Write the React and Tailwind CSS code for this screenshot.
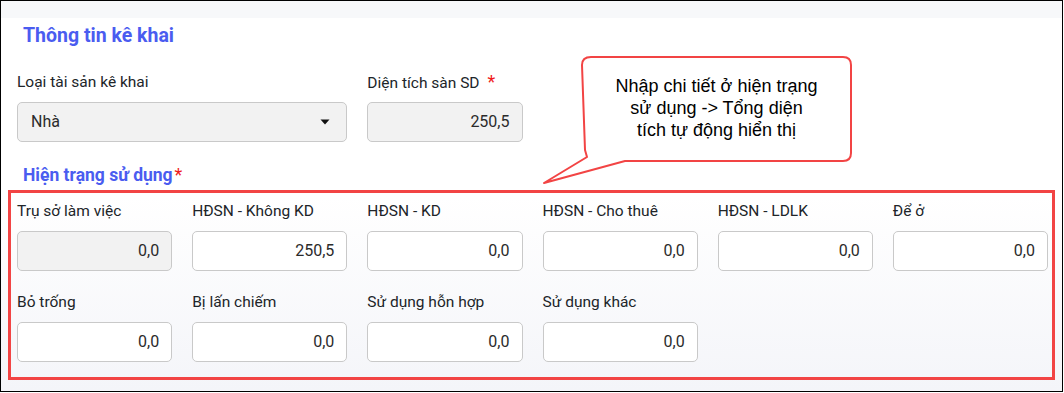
const usageFields = [
  { label: "Trụ sở làm việc", value: "0,0", disabled: true },
  { label: "HĐSN - Không KD", value: "250,5" },
  { label: "HĐSN - KD", value: "0,0" },
  { label: "HĐSN - Cho thuê", value: "0,0" },
  { label: "HĐSN - LDLK", value: "0,0" },
  { label: "Để ở", value: "0,0" },
  { label: "Bỏ trống", value: "0,0" },
  { label: "Bị lấn chiếm", value: "0,0" },
  { label: "Sử dụng hỗn hợp", value: "0,0" },
  { label: "Sử dụng khác", value: "0,0" },
];

const Field = ({ label, value, disabled, required }) => (
  <div className="flex flex-col">
    <div className="h-[20px] leading-[20px] text-[15.5px] text-[#212529] whitespace-nowrap">
      {label}
      {required && <span className="text-[#f01c1c] ml-[8px] text-[18px]">*</span>}
    </div>
    <div
      className={`mt-[10px] h-[40px] rounded-[5px] border border-[#c9c9c9] flex items-center justify-end pr-[12px] text-[16px] text-[#2b2b2b] ${
        disabled ? "bg-[#f2f2f2]" : "bg-white"
      }`}
    >
      {value}
    </div>
  </div>
);

// speech bubble drawn over the form
const Callout = () => (
  <>
    <svg
      className="absolute left-0 top-0 pointer-events-none"
      width="1064"
      height="393"
      viewBox="0 0 1064 393"
    >
      <path
        d="M 591 57 L 843 57 Q 851 57 851 65 L 851 153 Q 851 161 843 161 L 625 161 L 544 183 L 587 157 L 585 150 L 582 65 Q 582 57 591 57 Z"
        fill="white"
        stroke="#f24444"
        strokeWidth="2"
        strokeLinejoin="round"
      />
    </svg>
    <div className="absolute left-[582px] top-[75px] w-[269px] text-center text-[18px] leading-[22px] text-black font-['Liberation_Sans',Arial,sans-serif]">
      Nhập chi tiết ở hiện trạng
      <br />
      sử dụng -&gt; Tổng diện
      <br />
      tích tự động hiển thị
    </div>
  </>
);

export default function App() {
  return (
    <div className="relative w-[1064px] h-[393px] bg-white font-['Roboto',sans-serif]">
      <div className="w-[1063px] h-[392px] border border-black overflow-hidden bg-gradient-to-b from-white via-white to-[#f4f5f9]">
        <div className="h-[17px] bg-[#f7f8fa]" />

        <h2 className="mt-[6px] ml-[22px] h-[24px] leading-[24px] text-[19.5px] font-bold text-[#4a5cf0]">
          Thông tin kê khai
        </h2>

        <div className="mt-[24px] ml-[16px] w-[1031px] grid grid-cols-6 gap-x-[20px]">
          <div className="col-span-2 flex flex-col">
            <div className="h-[20px] leading-[20px] text-[15.5px] text-[#212529]">Loại tài sản kê khai</div>
            <div className="mt-[10px] h-[40px] rounded-[5px] border border-[#c9c9c9] bg-[#f2f2f2] flex items-center justify-between pl-[13px] pr-[16px] text-[16px] text-[#2b2b2b]">
              <span>Nhà</span>
              <svg width="10" height="6" viewBox="0 0 10 6">
                <path d="M0.5 0.5 L9.5 0.5 L5 5.5 Z" fill="#111" />
              </svg>
            </div>
          </div>
          <Field label="Diện tích sàn SD" value="250,5" disabled required />
        </div>

        <h3 className="mt-[21px] ml-[22px] h-[24px] leading-[24px] text-[17.5px] font-bold text-[#4a5cf0]">
          Hiện trạng sử dụng<span className="text-[#f01c1c] font-normal text-[18px] ml-[2px]">*</span>
        </h3>

        <div className="mt-[3px] ml-[7px] w-[1047px] h-[190px] border-[3px] border-[#f24444] pt-[8px] pl-[6px]">
          <div className="w-[1031px] grid grid-cols-6 gap-x-[20px] gap-y-[21px]">
            {usageFields.map((f) => (
              <Field key={f.label} label={f.label} value={f.value} disabled={f.disabled} />
            ))}
          </div>
        </div>
      </div>
      <Callout />
    </div>
  );
}
